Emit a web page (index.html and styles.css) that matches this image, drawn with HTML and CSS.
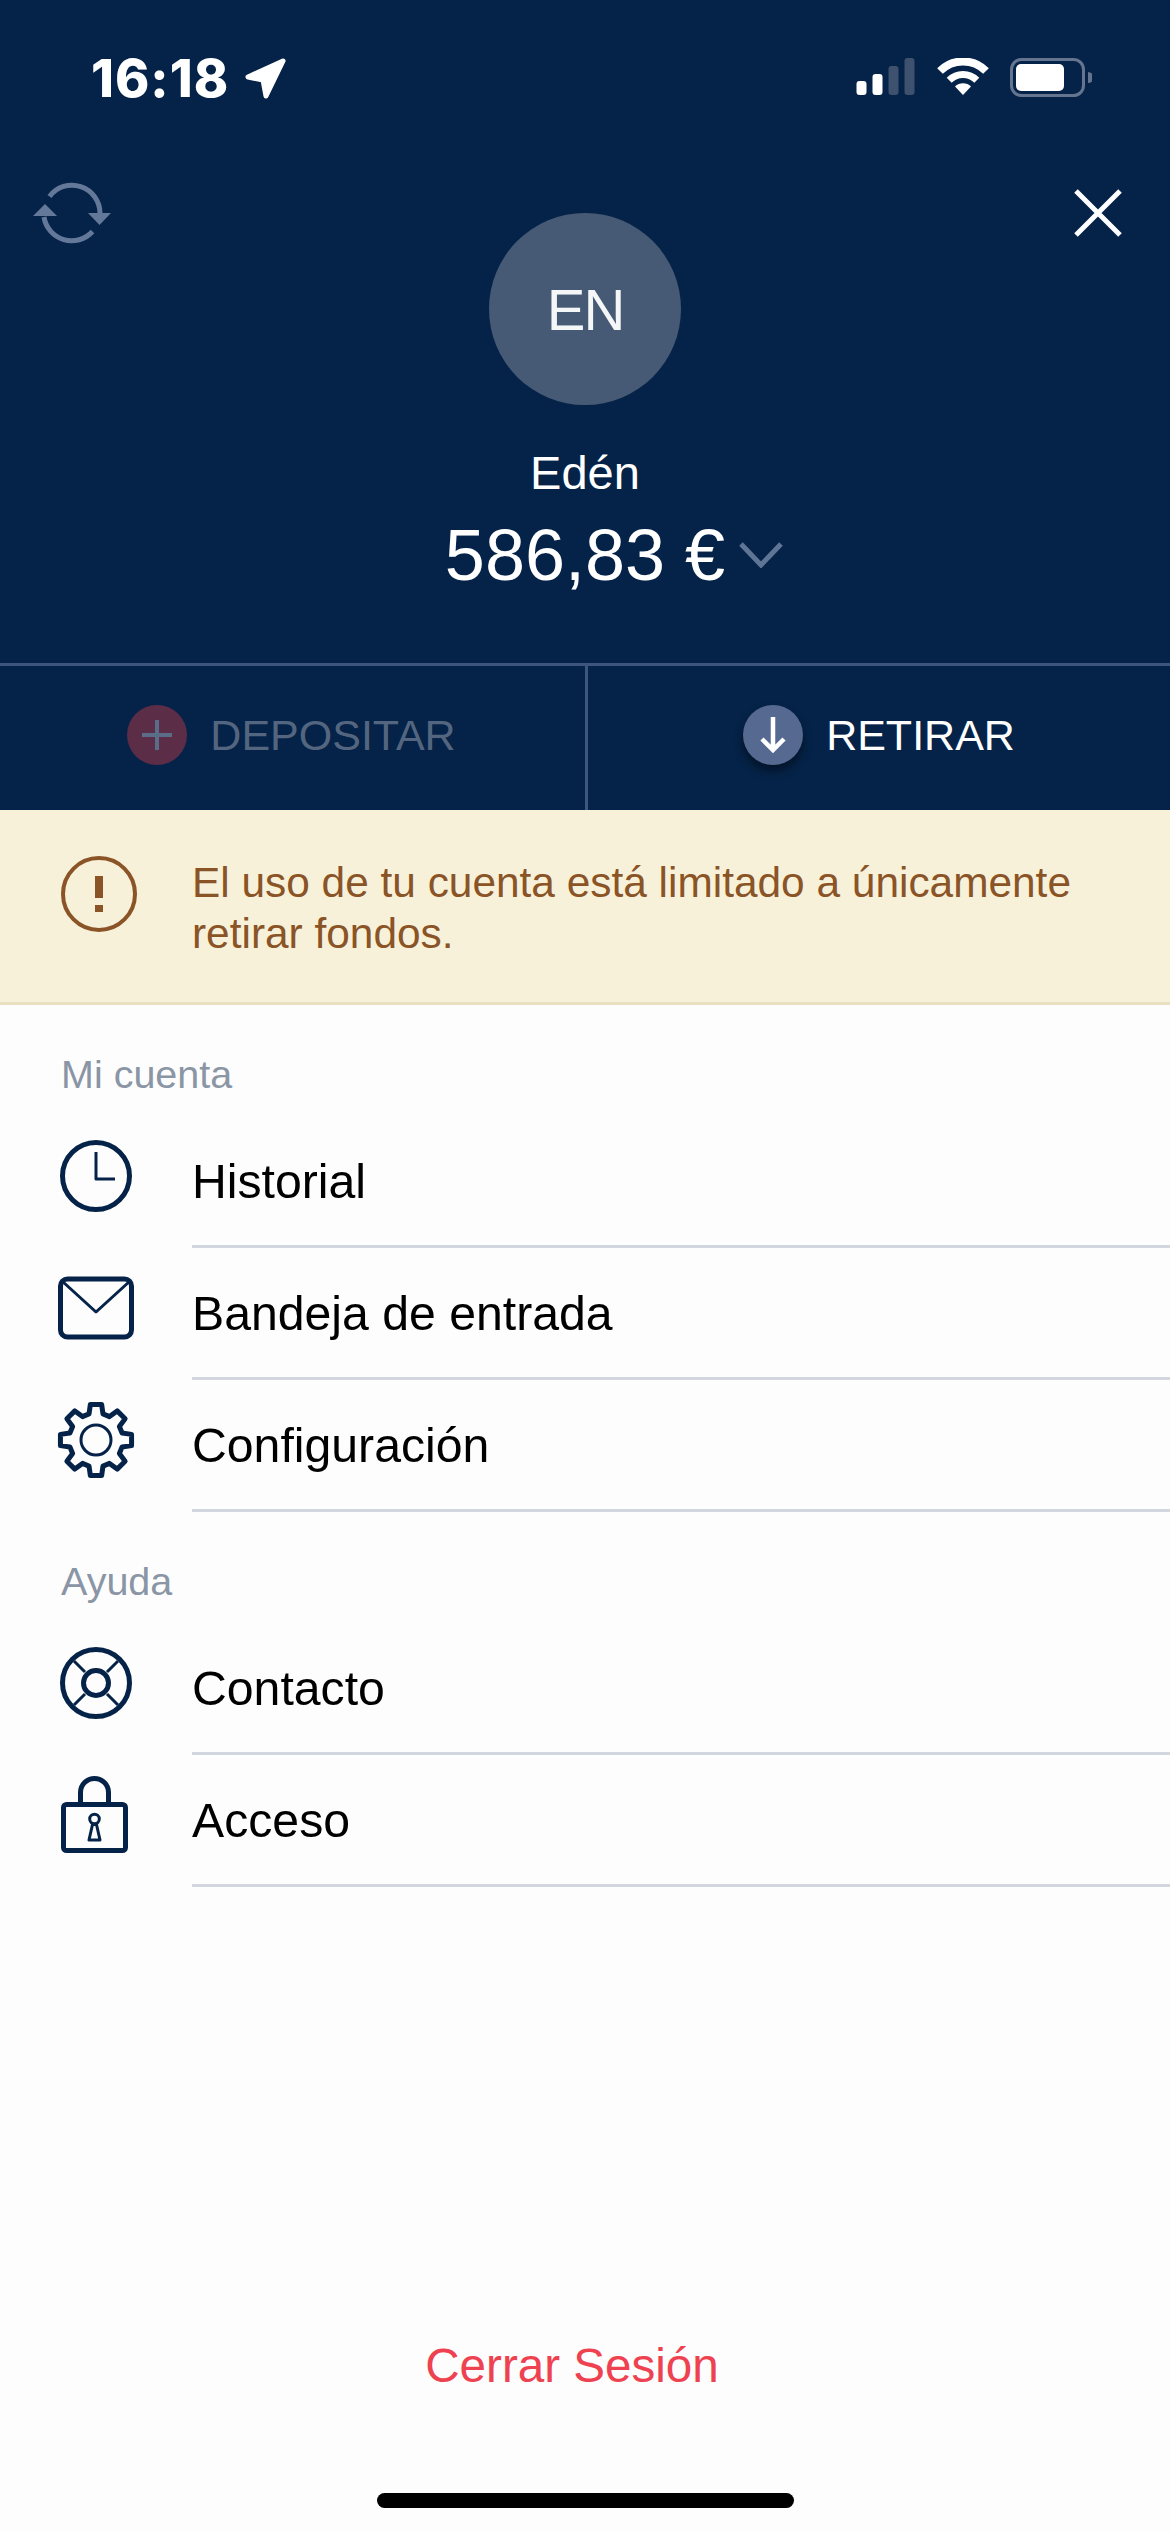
FILE: index.html
```html
<!DOCTYPE html>
<html lang="es">
<head>
  <meta charset="UTF-8" />
  <meta name="viewport" content="width=device-width, initial-scale=1.0" />
  <title>Mi cuenta</title>
  <link rel="stylesheet" href="styles.css">
</head>
<body>
  <header class="header">
    <div class="status">
      <div class="status-left">
        <span class="time">16:18</span>
        <svg class="loc" width="44" height="42" viewBox="0 0 44 42"><path d="M39 3 4 19l15 3 3 16z" fill="#fff" stroke="#fff" stroke-width="5" stroke-linejoin="round"/></svg>
      </div>
      <div class="status-right">
        <svg width="60" height="38" viewBox="0 0 60 38">
          <rect x="0.5" y="23" width="10" height="14" rx="3" fill="#fff"/>
          <rect x="16.5" y="16" width="10" height="21" rx="3" fill="#fff"/>
          <rect x="32.5" y="8" width="10" height="29" rx="3" fill="#3e5270"/>
          <rect x="48.5" y="0" width="10" height="37" rx="3" fill="#3e5270"/>
        </svg>
        <svg width="52" height="38" viewBox="0 0 52 38">
          <path d="M3 13a32.500 32.500 0 0 1 46 0" fill="none" stroke="#fff" stroke-width="8"/>
          <path d="M12.200 22.200a19.500 19.500 0 0 1 27.600 0" fill="none" stroke="#fff" stroke-width="7"/>
          <path d="M26 37 18 28.500a11.500 11.500 0 0 1 16 0z" fill="#fff"/>
        </svg>
        <svg width="82" height="39" viewBox="0 0 82 39">
          <rect x="1.500" y="1.500" width="72" height="36" rx="10" fill="none" stroke="#65758f" stroke-width="3"/>
          <rect x="6" y="6" width="48" height="27" rx="5" fill="#fff"/>
          <path d="M78 14a5.500 5.500 0 0 1 0 11z" fill="#65758f"/>
        </svg>
      </div>
    </div>

    <div class="profile-top">
      <svg class="sync" width="78" height="62" viewBox="0 0 78 62">
        <path d="M16.500 14.500A28 28 0 0 1 67 31" fill="none" stroke="#64799a" stroke-width="5"/>
        <path d="M11 35a28 28 0 0 0 48.500 14.500" fill="none" stroke="#64799a" stroke-width="5"/>
        <path d="M55 31h23L66.500 43z" fill="#64799a"/>
        <path d="M0 34h24L12 22z" fill="#64799a"/>
      </svg>
      <div class="avatar">EN</div>
      <svg class="close" width="48" height="48" viewBox="0 0 48 48"><path d="M2 2l44 44M46 2 2 46" stroke="#fff" stroke-width="5"/></svg>
    </div>
    <div class="name">Edén</div>
    <div class="balance">
      <span class="amount">586,83 €</span>
      <svg class="chevron" width="44" height="26" viewBox="0 0 44 26"><path d="M2 2l20 21L42 2" fill="none" stroke="#5e7595" stroke-width="5"/></svg>
    </div>

    <div class="actions">
      <div class="action disabled">
        <span class="action-icon plus">
          <svg width="32" height="32" viewBox="0 0 32 32"><path d="M16 1v30M1 16h30" stroke="#5a6c88" stroke-width="4"/></svg>
        </span>
        DEPOSITAR
      </div>
      <div class="action">
        <span class="action-icon down">
          <svg width="30" height="38" viewBox="0 0 30 38"><path d="M15 1v33M4 23l11 11 11-11" fill="none" stroke="#fff" stroke-width="4.500"/></svg>
        </span>
        RETIRAR
      </div>
    </div>
  </header>

  <div class="notice">
    <svg class="notice-icon" width="76" height="76" viewBox="0 0 76 76">
      <circle cx="38" cy="38" r="36" fill="none" stroke="#8a5427" stroke-width="4"/>
      <rect x="34" y="20" width="8" height="22" fill="#8a5427"/>
      <rect x="34" y="49" width="8" height="7" fill="#8a5427"/>
    </svg>
    <p class="notice-text">El uso de tu cuenta está limitado a únicamente<br>retirar fondos.</p>
  </div>

  <main class="menu">
    <div class="section-title">Mi cuenta</div>
    <a class="row">
      <svg class="row-icon" viewBox="0 0 80 80">
        <circle cx="40" cy="40" r="33.500" class="thick"/>
        <path d="M40 16v27h19" class="thin"/>
      </svg>
      <span class="row-label">Historial</span>
    </a>
    <a class="row">
      <svg class="row-icon" viewBox="0 0 80 80">
        <rect x="4.500" y="11" width="71" height="58" rx="7" class="thick"/>
        <path d="M6 13l34 31 34-31" class="thin"/>
      </svg>
      <span class="row-label">Bandeja de entrada</span>
    </a>
    <a class="row">
      <svg class="row-icon" viewBox="-40 -40 80 80">
        <path class="thick" d="M5.630-35.560 6.990-26.080 13.500-23.380 21.160-29.120 29.120-21.160 23.380-13.500 26.080-6.990 35.560-5.630V5.630L26.080 6.990 23.380 13.500 29.120 21.160 21.160 29.120 13.500 23.380 6.990 26.080 5.630 35.560H-5.630L-6.990 26.080-13.500 23.380-21.160 29.120-29.120 21.160-23.380 13.500-26.080 6.990-35.560 5.630V-5.630L-26.080-6.990-23.380-13.500-29.120-21.160-21.160-29.120-13.500-23.380-6.990-26.080-5.630-35.560Z"/>
        <circle r="15" class="thin"/>
      </svg>
      <span class="row-label">Configuración</span>
    </a>

    <div class="section-title">Ayuda</div>
    <a class="row">
      <svg class="row-icon" viewBox="0 0 80 80">
        <circle cx="40" cy="40" r="33.500" class="thick"/>
        <circle cx="40" cy="40" r="12.500" class="thick"/>
        <path d="M29 29 18 18M51 29l11-11M29 51 18 62M51 51l11 11" class="thin"/>
      </svg>
      <span class="row-label">Contacto</span>
    </a>
    <a class="row">
      <svg class="row-icon" viewBox="0 0 80 80">
        <rect x="7.500" y="29.500" width="62" height="46" rx="3" class="thick"/>
        <path d="M24.500 29V17.500a14 14 0 0 1 28 0V29" class="thick"/>
        <circle cx="38.500" cy="44" r="4.800" class="thin"/>
        <path d="M36.500 49.500 33 65h11l-3.500-15.500z" class="thin"/>
      </svg>
      <span class="row-label">Acceso</span>
    </a>
  </main>

  <footer class="footer">
    <a class="logout">Cerrar Sesión</a>
    <div class="home-bar"></div>
  </footer>
</body>
</html>
```

FILE: styles.css
```css
* {
  box-sizing: border-box;
}
body {
  margin: 0;
  width: 1170px;
  height: 2532px;
  display: flex;
  flex-direction: column;
  overflow: hidden;
  background: #fdfdfd;
  font-family: 'Liberation Sans', Arial, sans-serif;
  color: #000;
}

/* header */
.header {
  background: #052348;
  color: #fff;
}
.status {
  height: 182px;
  padding: 58px 78px 0 91px;
  display: flex;
  justify-content: space-between;
  align-items: flex-start;
}
.status-left {
  display: flex;
  align-items: center;
  gap: 15px;
}
.time {
  font-family: Inter, 'Liberation Sans', sans-serif;
  font-weight: 800;
  font-size: 52px;
  line-height: 40px;
  letter-spacing: 1px;
}
.status-right {
  display: flex;
  align-items: flex-start;
  gap: 21px;
}
.status-right svg {
  display: block;
}
.profile-top {
  display: grid;
  grid-template-columns: 1fr auto 1fr;
  padding: 0 33px;
}
.close {
  justify-self: end;
  margin-top: 7px;
  margin-right: 15px;
}
.avatar {
  width: 192px;
  height: 192px;
  margin-top: 31px;
  border-radius: 50%;
  background: #475a75;
  display: flex;
  align-items: center;
  justify-content: center;
  font-size: 58px;
  letter-spacing: -2px;
  color: #f5f6f8;
}
.name {
  margin-top: 40px;
  font-size: 47px;
  line-height: 56px;
  text-align: center;
}
.balance {
  margin-top: 12px;
  display: grid;
  grid-template-columns: 1fr auto 1fr;
  align-items: center;
  height: 84px;
}
.amount {
  grid-column: 2;
  font-size: 72px;
  line-height: 84px;
}
.chevron {
  margin-left: 14px;
}
.actions {
  margin-top: 66px;
  height: 147px;
  border-top: 3px solid #3e5580;
  display: grid;
  grid-template-columns: 585px 1fr;
}
.action {
  display: flex;
  align-items: center;
  justify-content: center;
  gap: 23px;
  padding-bottom: 6px;
  font-size: 43px;
}
.action + .action {
  border-left: 3px solid #3e5580;
}
.action.disabled {
  color: #54667f;
  padding-right: 2px;
}
.action-icon {
  width: 60px;
  height: 60px;
  border-radius: 50%;
  display: flex;
  align-items: center;
  justify-content: center;
}
.plus {
  background: #5b2d47;
}
.down {
  background: #566a91;
  box-shadow: 0 6px 10px rgba(0, 0, 0, 0.45);
}

/* notice */
.notice {
  height: 195px;
  padding: 46px 0 0 61px;
  display: flex;
  align-items: flex-start;
  gap: 55px;
  background: #f7f1da;
  border-bottom: 3px solid #e8e0c0;
}
.notice-icon {
  flex: none;
}
.notice-text {
  margin: 0;
  padding-top: 1px;
  font-size: 42.4px;
  line-height: 51px;
  color: #8a5427;
}

/* menu */
.menu {
  flex: 1;
}
.section-title {
  height: 111px;
  padding: 47px 0 0 61px;
  font-size: 39.5px;
  line-height: 45px;
  color: #8a95a5;
}
.row {
  height: 132px;
  padding-left: 56px;
  display: flex;
}
.row-icon {
  flex: none;
  width: 80px;
  height: 80px;
  align-self: center;
  margin-bottom: 12px;
}
.row-icon .thick,
.row-icon .thin {
  fill: none;
  stroke: #052348;
  stroke-linejoin: round;
}
.row-icon .thick {
  stroke-width: 5;
}
.row-icon .thin {
  stroke-width: 3;
}
.row-label {
  flex: 1;
  margin-left: 56px;
  display: flex;
  align-items: center;
  font-size: 48.2px;
  border-bottom: 3px solid #d2d6df;
}

/* footer */
.footer {
  display: flex;
  flex-direction: column;
  align-items: center;
}
.logout {
  padding-right: 26px;
  font-size: 47.6px;
  line-height: 60px;
  color: #ee4250;
}
.home-bar {
  width: 417px;
  height: 15px;
  margin: 97px 0 24px;
  border-radius: 8px;
  background: #000;
}
```
